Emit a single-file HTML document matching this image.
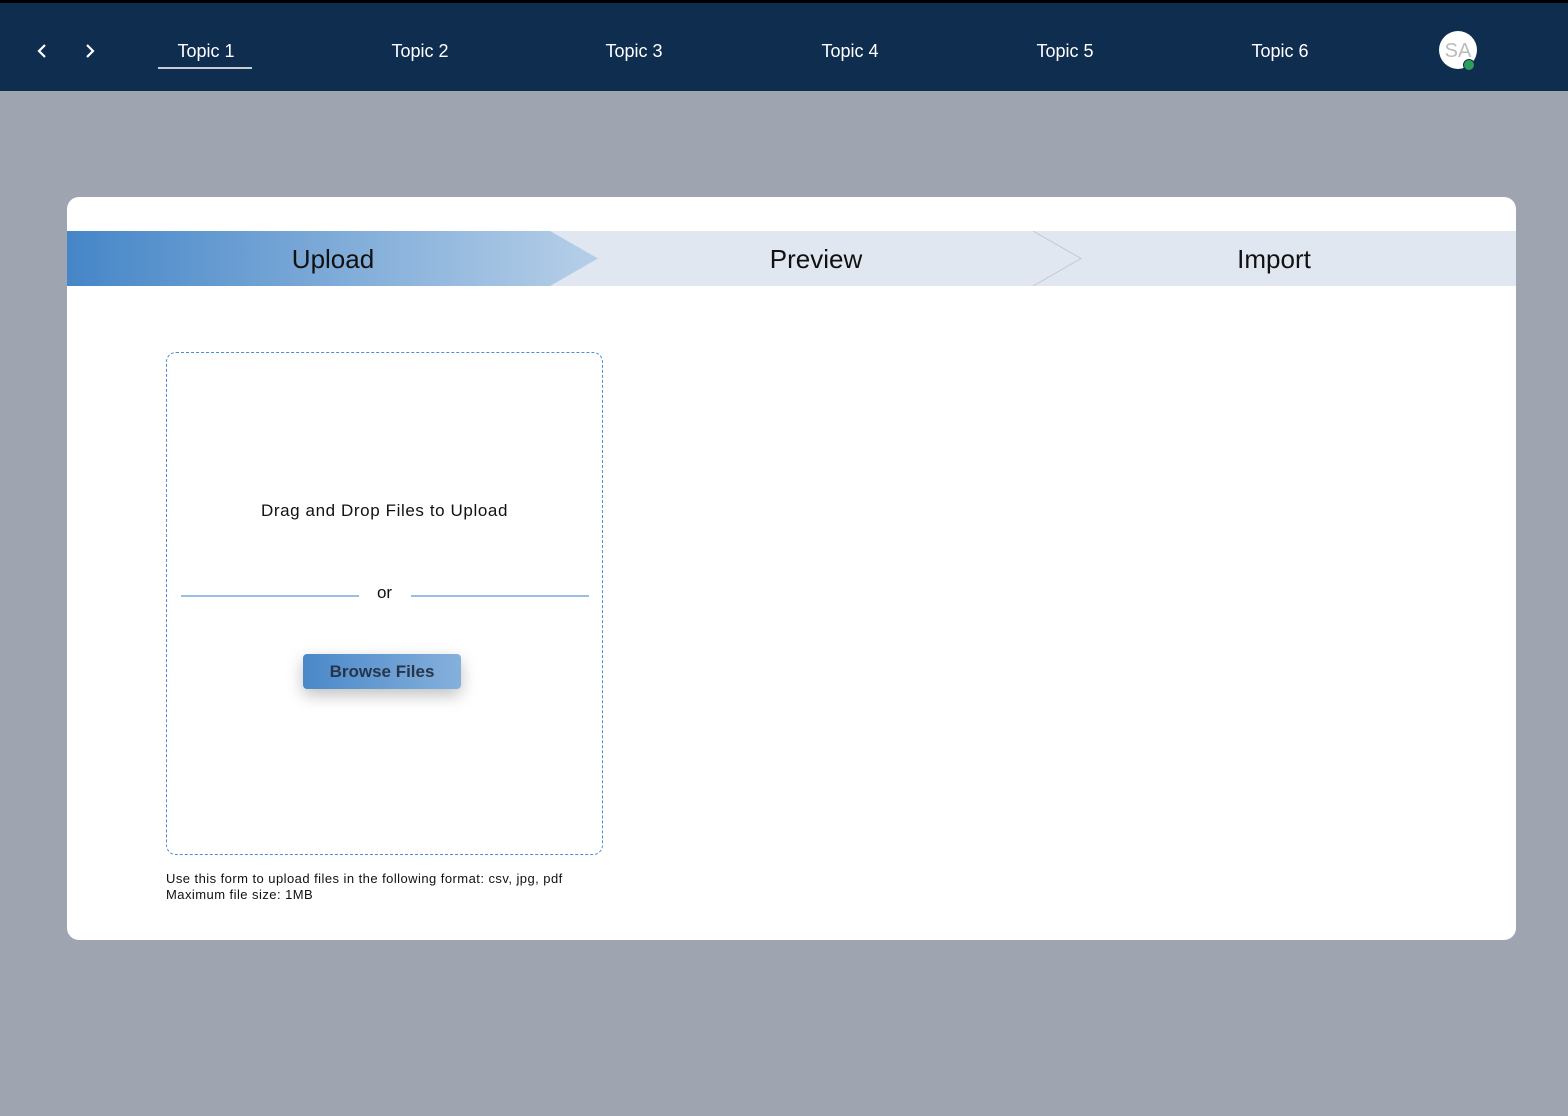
<!DOCTYPE html>
<html><head><meta charset="utf-8"><style>
*{margin:0;padding:0;box-sizing:border-box}
body{width:1568px;height:1116px;background:#9ea4b0;font-family:"Liberation Sans",sans-serif;position:relative;overflow:hidden}
.nav{position:absolute;left:0;top:0;width:1568px;height:91px;background:#0f2d4e;border-top:3px solid #000}
.nav .t{position:absolute;top:38px;color:#fff;font-size:18px;transform:translateX(-50%);white-space:nowrap}
.ul{position:absolute;left:158px;width:94px;height:2px;background:#c8ccd2}
.av{position:absolute;left:1439px;width:38px;height:38px;border-radius:50%;background:#fff;color:#bbb;font-size:20px;text-align:center;line-height:40px}
.dot{position:absolute;left:1463px;width:12px;height:12px;border-radius:50%;background:#2e9e5b;border:1.5px solid #0f2d4e}
.card{position:absolute;left:67px;top:197px;width:1449px;height:743px;background:#fff;border-radius:12px;overflow:hidden}
.steps{position:absolute;left:0;top:34px;width:1449px;height:55px}
.lbl{position:absolute;font-size:26px;color:#111;transform:translateX(-50%);font-weight:300}
.drop{position:absolute;left:99px;top:155px;width:437px;height:503px;border:1.5px dashed #4a8fd8;border-radius:10px}
.line{position:absolute;top:242px;height:2px;background:#9bbde3}
.btn{position:absolute;left:136px;top:301px;width:158px;height:35px;border-radius:4px;background:linear-gradient(90deg,#4a88c9,#85b0dc);color:#27354a;font-weight:bold;font-size:17px;text-align:center;line-height:35px;box-shadow:0 6px 16px rgba(0,0,0,.25)}
.note{position:absolute;left:99px;top:674px;font-size:13px;color:#111;line-height:16px;letter-spacing:0.45px}
</style></head><body>
<div class="nav">
<svg style="position:absolute;left:35px;top:40px" width="14" height="16"><path d="M10 2L4 8L10 14" stroke="#fff" stroke-width="2.2" fill="none"/></svg>
<svg style="position:absolute;left:83px;top:40px" width="14" height="16"><path d="M4 2L10 8L4 14" stroke="#fff" stroke-width="2.2" fill="none"/></svg>
<div class="t" style="left:206px">Topic 1</div>
<div class="t" style="left:420px">Topic 2</div>
<div class="t" style="left:634px">Topic 3</div>
<div class="t" style="left:850px">Topic 4</div>
<div class="t" style="left:1065px">Topic 5</div>
<div class="t" style="left:1280px">Topic 6</div>
<div class="ul" style="top:64px"></div>
<div class="av" style="top:28px">SA</div>
<div class="dot" style="top:56px"></div>
</div>
<div class="card">
<svg class="steps" width="1449" height="55">
<defs><linearGradient id="g" x1="0" x2="1"><stop offset="0" stop-color="#4586c8"/><stop offset="1" stop-color="#b6cfe8"/></linearGradient></defs>
<rect width="1449" height="55" fill="#e0e7f0"/>
<polygon points="0,0 483,0 531,27.5 483,55 0,55" fill="url(#g)"/>
<polyline points="966,0 1014,27.5 966,55" fill="none" stroke="#c4c8cf" stroke-width="1"/>
</svg>
<div class="lbl" style="left:266px;top:47px">Upload</div>
<div class="lbl" style="left:749px;top:47px">Preview</div>
<div class="lbl" style="left:1207px;top:47px">Import</div>
<div class="drop">
<div style="position:absolute;left:0;width:100%;top:148px;text-align:center;font-size:17px;color:#111;letter-spacing:0.6px">Drag and Drop Files to Upload</div>
<div class="line" style="left:14px;width:178px"></div>
<div style="position:absolute;left:0;width:100%;top:230px;text-align:center;font-size:17px;color:#111">or</div>
<div class="line" style="left:244px;width:178px"></div>
<div class="btn">Browse Files</div>
</div>
<div class="note">Use this form to upload files in the following format: csv, jpg, pdf<br>Maximum file size: 1MB</div>
</div>
</body></html>
